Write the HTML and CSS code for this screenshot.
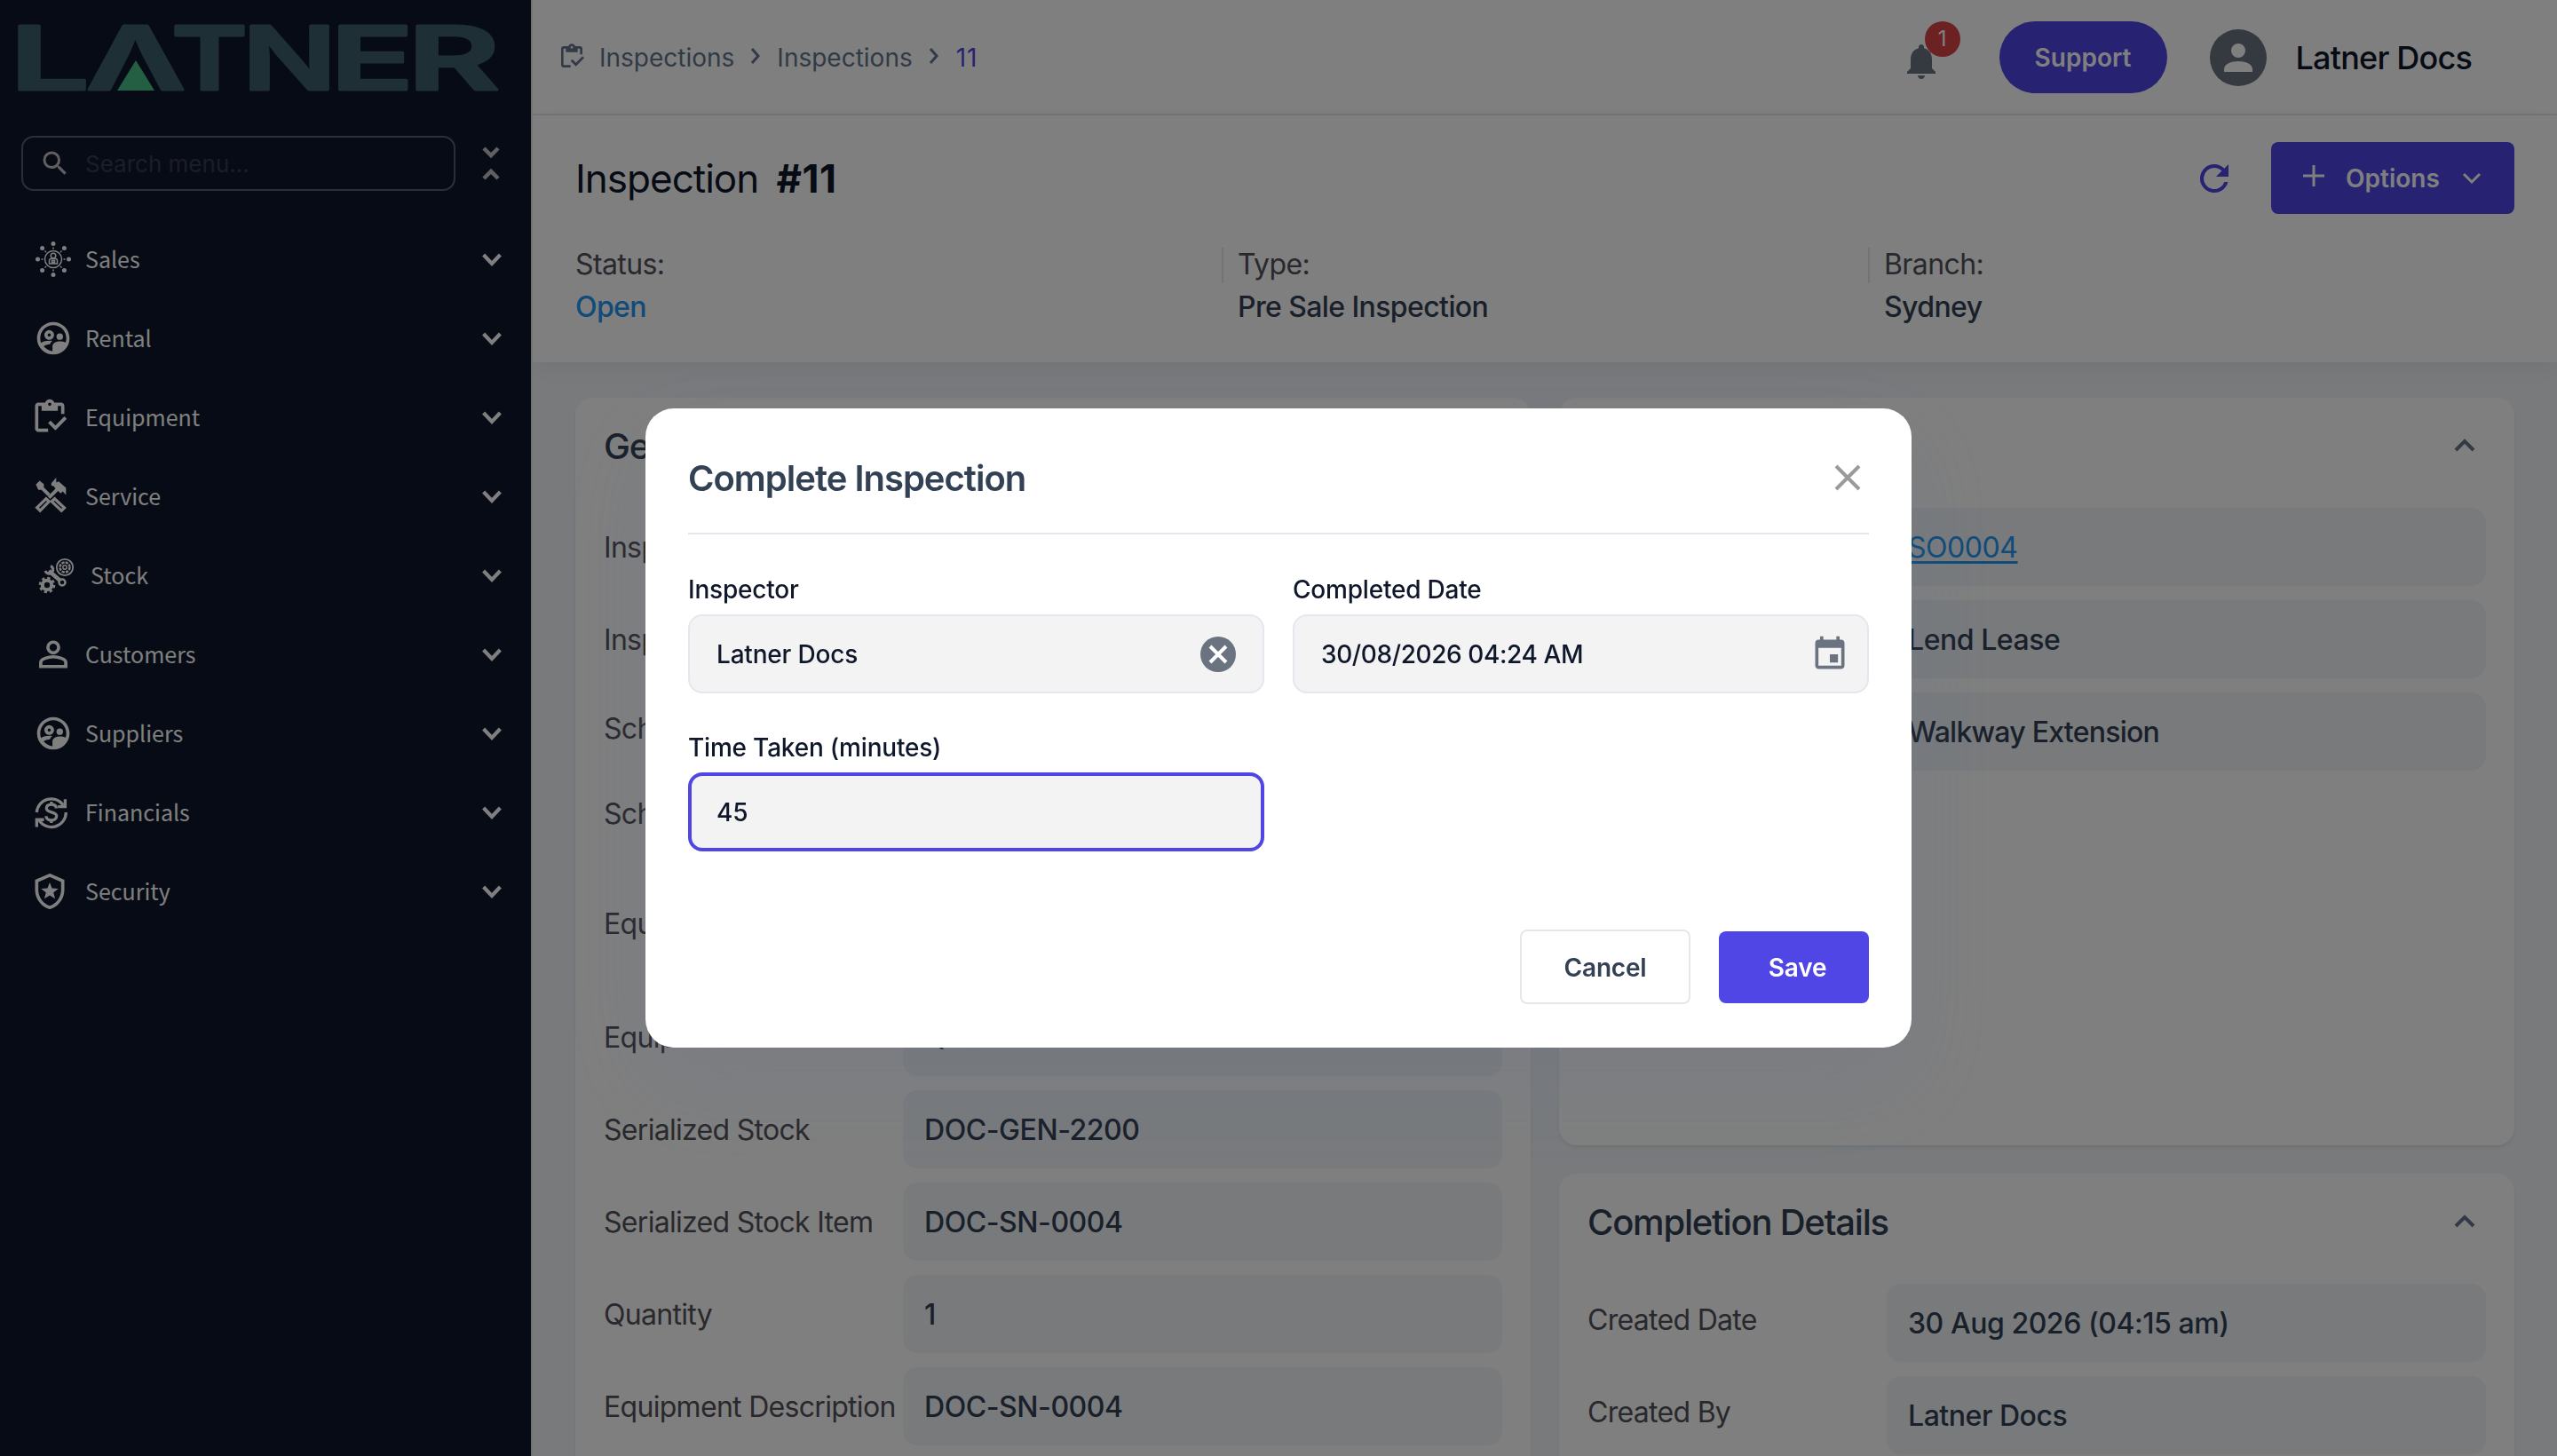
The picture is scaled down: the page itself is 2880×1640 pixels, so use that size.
FILE: index.html
```html
<!DOCTYPE html>
<html lang="en">
<head>
  <meta charset="UTF-8">
  <meta name="viewport" content="width=device-width, initial-scale=1.0">
  <title>Inspection #11</title>
  <link rel="stylesheet" href="styles.css">
</head>
<body>
  <!-- shared icons -->
  <svg width="0" height="0" class="defs">
    <symbol id="chevron" viewBox="0 0 24 24"><path d="M4.500 8l7.500 8 7.500-8" fill="none" stroke="currentColor"/></symbol>
    <symbol id="group" viewBox="0 0 24 24"><path fill="currentColor" fill-rule="evenodd" d="M12 2C6.480 2 2 6.480 2 12s4.480 10 10 10 10-4.480 10-10S17.520 2 12 2zM4 12c0-4.420 3.580-8 8-8s8 3.580 8 8c0 .9-.15 1.760-.42 2.570-.9-.4-2.280-.68-3.580-.68-2 0-4.500 1-4.500 3v3C10.400 19.900 7.600 18.800 6.100 16.900c1.200-.9 2.800-1.100 3.800-1.200.300-.7.800-1.400 1.500-2-.7-.2-1.400-.2-1.900-.2-1.500 0-3.700.4-5 1.300A8 8 0 0 1 4 12z"/><path fill="currentColor" fill-rule="evenodd" d="M9.500 7a3 3 0 1 0 0 6 3 3 0 0 0 0-6zm0 2a1 1 0 1 1 0 2 1 1 0 0 1 0-2z"/><circle cx="16" cy="11" r="2" fill="currentColor"/></symbol>
    <symbol id="clipboard" viewBox="0 0 24 24"><path fill="currentColor" fill-rule="evenodd" d="M5 5h2v3h10V5h2v5h2V5c0-1.100-.9-2-2-2h-4.180C14.400 1.840 13.300 1 12 1s-2.400.84-2.820 2H5c-1.100 0-2 .9-2 2v14c0 1.100.9 2 2 2h6v-2H5V5zm7-2c.55 0 1 .45 1 1s-.45 1-1 1-1-.45-1-1 .45-1 1-1z"/><path fill="currentColor" d="M21 11.500L15.510 17l-3.010-3-1.500 1.500L15.510 20l6.990-7z"/></symbol>
  </svg>

  <aside class="sidebar">
    <svg class="logo" width="550" height="86" viewBox="0 0 550 86">
      <g class="logo_text">
        <text x="-13" y="81" textLength="90" lengthAdjust="spacingAndGlyphs">L</text>
        <text x="73" y="81" textLength="112" lengthAdjust="spacingAndGlyphs">Λ</text>
        <text x="169" y="81" textLength="86" lengthAdjust="spacingAndGlyphs">T</text>
        <text x="249" y="81" textLength="106" lengthAdjust="spacingAndGlyphs">N</text>
        <text x="348" y="81" textLength="94" lengthAdjust="spacingAndGlyphs">E</text>
        <text x="435" y="81" textLength="104" lengthAdjust="spacingAndGlyphs">R</text>
      </g>
      <polygon points="129,48 150,82 108,82" class="logo_mark"/>
    </svg>
    <div class="search_row">
      <div class="search">
        <svg width="36" height="36" viewBox="0 0 24 24"><path fill="currentColor" d="M15.500 14h-.79l-.28-.27A6.470 6.470 0 0 0 16 9.500 6.500 6.500 0 1 0 9.500 16c1.610 0 3.090-.59 4.230-1.570l.27.28v.79l5 4.990L20.490 19l-4.990-5zm-6 0C7.010 14 5 11.990 5 9.500S7.010 5 9.500 5 14 7.010 14 9.500 11.990 14 9.500 14z"/></svg>
        <span>Search menu...</span>
      </div>
      <svg class="collapse" width="20" height="40" viewBox="0 0 20 40"><path d="M2 3l8 8 8-8M2 37l8-8 8 8"/></svg>
    </div>
    <nav class="menu">
      <a><svg class="ico" width="44" height="44" viewBox="0 0 44 44">
          <g fill="currentColor"><circle cx="22" cy="4.500" r="2.500"/><circle cx="22" cy="39.500" r="2.500"/><circle cx="4.500" cy="22" r="2.500"/><circle cx="39.500" cy="22" r="2.500"/><circle cx="9.600" cy="9.600" r="2.500"/><circle cx="34.400" cy="9.600" r="2.500"/><circle cx="9.600" cy="34.400" r="2.500"/><circle cx="34.400" cy="34.400" r="2.500"/></g>
          <g fill="none" stroke="currentColor" stroke-width="1.500"><circle cx="22" cy="22" r="9.500"/><circle cx="22" cy="18" r="2.800"/><path d="M17.500 27v-3.500c0-1.200 1-2 2-2h5c1 0 2 .8 2 2V27zM20.500 23.500h3v2h-3z"/><path d="M22 8.500v2M22 33.500v2M8.500 22h2M33.500 22h2M12.500 12.500l1.500 1.500M30 30l1.500 1.500M31.500 12.500L30 14M14 30l-1.500 1.500"/></g>
        </svg><span>Sales</span><svg class="chev"><use href="#chevron"/></svg></a>
      <a><svg class="ico"><use href="#group"/></svg><span>Rental</span><svg class="chev"><use href="#chevron"/></svg></a>
      <a><svg class="ico left"><use href="#clipboard"/></svg><span>Equipment</span><svg class="chev"><use href="#chevron"/></svg></a>
      <a><svg class="ico left" viewBox="0 0 24 24">
          <path fill="currentColor" d="M3.500 4.800L5.800 2.500l2.600 2v2l4 4-1.500 1.500-4-4h-1.900z"/>
          <path fill="currentColor" d="M13 4l3-3.500v3l1.500-.7 4.500 4v4.400L20 9l-1.300 1.200-1.600-1.500-4.800 5-1.500-1.500 4.700-4.800-.9-1.500-1.600-.5z"/>
          <path fill="none" stroke="currentColor" stroke-width="1.800" d="M9.800 13.500l-5.600 5.400 1.900 1.900 5.500-5.600zM15 13.500l6 5.600-1.800 1.800-6-5.700z"/>
        </svg><span>Service</span><svg class="chev"><use href="#chevron"/></svg></a>
      <a><svg class="ico stock" viewBox="0 0 44 44">
          <circle cx="31" cy="13" r="9.200" fill="none" stroke="currentColor" stroke-width="1.800"/>
          <circle cx="31" cy="13" r="5.500" fill="none" stroke="currentColor" stroke-width="2.500" stroke-dasharray="3.200 1.120"/>
          <circle cx="31" cy="13" r="2.200" fill="none" stroke="currentColor" stroke-width="1.500"/>
          <path d="M13 17l14 12" fill="none" stroke="currentColor" stroke-width="4.500"/>
          <path d="M15 11.500a4.500 4.500 0 1 1-6 5.500" fill="none" stroke="currentColor" stroke-width="3"/>
          <circle cx="28" cy="30" r="3.500" fill="#0f172a" stroke="currentColor" stroke-width="2.500"/>
          <circle cx="11" cy="33" r="5.200" fill="#0f172a" stroke="currentColor" stroke-width="4"/>
          <circle cx="11" cy="33" r="8" fill="none" stroke="currentColor" stroke-width="2.500" stroke-dasharray="3.300 2.983"/>
        </svg><span>Stock</span><svg class="chev"><use href="#chevron"/></svg></a>
      <a><svg class="ico" viewBox="0 0 24 24"><path fill="none" stroke="currentColor" stroke-width="2" d="M12 4.500a3.300 3.300 0 1 0 0 6.600 3.300 3.300 0 0 0 0-6.600zM4.300 19.500V17c0-2.300 5-3.500 7.700-3.500s7.700 1.200 7.700 3.500v2.500z"/></svg><span>Customers</span><svg class="chev"><use href="#chevron"/></svg></a>
      <a><svg class="ico"><use href="#group"/></svg><span>Suppliers</span><svg class="chev"><use href="#chevron"/></svg></a>
      <a><svg class="ico left" viewBox="0 0 24 24"><path fill="none" stroke="currentColor" stroke-width="1.800" d="M4 12a9 9 0 0 1 16.300-4.500M22 12A9 9 0 0 1 5.500 17M21.500 4v4.500H17M4 21v-4.500h4.500M16 9.500c0-1.500-1.300-2.300-3-2.300s-3 .8-3 2.400c0 3 6.200 1.600 6.200 4.700 0 1.600-1.400 2.500-3.200 2.500s-3.200-.9-3.200-2.500M13 5.500v1.700M13 16.800v1.700"/></svg><span>Financials</span><svg class="chev"><use href="#chevron"/></svg></a>
      <a><svg class="ico left" viewBox="0 0 24 24"><path fill="none" stroke="currentColor" stroke-width="2" d="M12 2.100L4 5.600v5.400c0 5 3.400 9.700 8 10.900 4.600-1.200 8-5.900 8-10.900V5.600z"/><path fill="currentColor" d="M12 6.500l1.400 3.600 3.900.2-3 2.400 1 3.800-3.300-2.100-3.300 2.100 1-3.800-3-2.400 3.900-.2z"/></svg><span>Security</span><svg class="chev"><use href="#chevron"/></svg></a>
    </nav>
  </aside>

  <main class="main">
    <header class="topbar">
      <div class="crumbs">
        <svg class="crumb_ico"><use href="#clipboard"/></svg>
        <span>Inspections</span>
        <svg class="sep" viewBox="0 0 10 18"><path d="M1 1l7 8-7 8"/></svg>
        <span>Inspections</span>
        <svg class="sep" viewBox="0 0 10 18"><path d="M1 1l7 8-7 8"/></svg>
        <span class="current">11</span>
      </div>
      <div class="bell">
        <svg width="48" height="48" viewBox="0 0 24 24"><path fill="currentColor" d="M12 22c1.100 0 2-.9 2-2h-4c0 1.100.9 2 2 2zm6-6v-5c0-3.070-1.640-5.640-4.500-6.320V4c0-.83-.67-1.500-1.500-1.500s-1.500.67-1.500 1.500v.68C7.630 5.360 6 7.920 6 11v5l-2 2v1h16v-1l-2-2z"/></svg>
        <span class="badge">1</span>
      </div>
      <button type="button" class="support">Support</button>
      <svg class="avatar" viewBox="0 0 64 64"><circle cx="32" cy="32" r="32" fill="#68747f"/><path fill="#fff" d="M32 16a8 8 0 1 0 0 16 8 8 0 0 0 0-16zM16 48v-3c0-6 8-9 16-9s16 3 16 9v3z"/></svg>
      <span class="user">Latner Docs</span>
    </header>

    <section class="page_head">
      <div class="title_row">
        <h1>Inspection <b>#11</b></h1>
        <svg class="refresh" viewBox="0 0 24 24"><path fill="currentColor" d="M17.650 6.350A7.960 7.960 0 0 0 12 4a8 8 0 1 0 7.730 10h-2.080A6 6 0 1 1 12 6c1.660 0 3.140.69 4.220 1.780L13 11h7V4z"/></svg>
        <button type="button" class="options">
          <svg width="26" height="26" viewBox="0 0 26 26"><path d="M13 1v24M1 13h24"/></svg>
          Options
          <svg class="opt_chev" width="22" height="14" viewBox="0 0 22 14"><path d="M2 2l9 9 9-9"/></svg>
        </button>
      </div>
      <div class="facts">
        <div><p>Status:</p><strong class="open">Open</strong></div>
        <div><p>Type:</p><strong>Pre Sale Inspection</strong></div>
        <div><p>Branch:</p><strong>Sydney</strong></div>
      </div>
    </section>

    <section class="cards">
      <div class="card tall">
        <h2>General</h2>
        <dl>
          <dt>Inspection</dt><dd></dd>
          <dt>Inspection</dt><dd></dd>
          <dt>Sched</dt><dd class="mid"></dd>
          <dt>Sched</dt><dd class="mid"></dd>
          <dt>Equipment</dt><dd class="big"></dd>
          <dt>Equipment Model</dt><dd>QAS 20</dd>
          <dt>Serialized Stock</dt><dd>DOC-GEN-2200</dd>
          <dt>Serialized Stock Item</dt><dd>DOC-SN-0004</dd>
          <dt>Quantity</dt><dd>1</dd>
          <dt>Equipment Description</dt><dd>DOC-SN-0004</dd>
        </dl>
      </div>
      <div class="col">
        <div class="card sale">
          <h2><span></span><svg class="up" viewBox="0 0 24 16"><path d="M2 13L12 3l10 10"/></svg></h2>
          <dl>
            <dt></dt><dd><a class="link">SO0004</a></dd>
            <dt></dt><dd>Lend Lease</dd>
            <dt></dt><dd class="tight">Walkway Extension</dd>
          </dl>
        </div>
        <div class="card completion">
          <h2>Completion Details <svg class="up" viewBox="0 0 24 16"><path d="M2 13L12 3l10 10"/></svg></h2>
          <dl>
            <dt>Created Date</dt><dd>30 Aug 2026 (04:15 am)</dd>
            <dt>Created By</dt><dd>Latner Docs</dd>
          </dl>
        </div>
      </div>
    </section>
  </main>

  <div class="overlay"></div>
  <div class="modal">
    <div class="modal_head">
      <h3>Complete Inspection</h3>
      <svg width="30" height="30" viewBox="0 0 30 30"><path d="M2 2l26 26M28 2L2 28"/></svg>
    </div>
    <div class="fields">
      <div class="field">
        <label>Inspector</label>
        <div class="input">Latner Docs
          <svg class="clear" width="40" height="40" viewBox="0 0 40 40"><circle cx="20" cy="20" r="20" fill="#6b7280"/><path d="M11 11l18 18M29 11L11 29" stroke="#fff" stroke-width="4"/></svg>
        </div>
      </div>
      <div class="field">
        <label>Completed Date</label>
        <div class="input date">30/08/2026 04:24 AM
          <svg class="cal" width="44" height="44" viewBox="0 0 24 24"><path fill="#6b7280" fill-rule="evenodd" d="M17 12h-5v5h5v-5zM16 1v2H8V1H6v2H5c-1.110 0-2 .9-2 2v14c0 1.100.89 2 2 2h14c1.100 0 2-.9 2-2V5c0-1.100-.9-2-2-2h-1V1h-2zm3 18H5V8h14v11z"/></svg>
        </div>
      </div>
      <div class="field">
        <label>Time Taken (minutes)</label>
        <div class="input focus">45</div>
      </div>
    </div>
    <div class="actions">
      <button type="button" class="cancel">Cancel</button>
      <button type="button" class="save">Save</button>
    </div>
  </div>
</body>
</html>
```
FILE: styles.css
```css
:root {
  /* color */
  --primary: #4f46e5;
  --navy: #0f172a;
  --slate: #334155;
  --muted: #52525b;
  --bg: #f1f5f9;
  --line: #e5e7ef;
}

* {
  box-sizing: border-box;
  margin: 0;
  padding: 0;
}

body {
  display: flex;
  width: 2880px;
  height: 1640px;
  overflow: hidden;
  background: var(--bg);
  color: var(--navy);
  font-family: Inter, "Liberation Sans", sans-serif;
  font-size: 32px;
}

button {
  border: 0;
  font-family: inherit;
}

.defs {
  position: absolute;
}

/* sidebar */
.sidebar {
  flex: none;
  width: 600px;
  height: 1640px;
  padding: 20px 24px 0;
  border-right: 2px solid #e5e7eb;
  background: var(--navy);
}

.logo {
  display: block;
  overflow: visible;
}

.logo_text {
  fill: #3c5e6c;
  stroke: #3c5e6c;
  stroke-width: 3;
  stroke-linejoin: round;
  font-size: 99px;
  font-weight: 600;
}

.logo_mark {
  fill: #4abe86;
}

.search_row {
  display: flex;
  align-items: center;
  margin-top: 47px;
}

.search {
  display: flex;
  align-items: center;
  width: 489px;
  height: 62px;
  padding-left: 18px;
  border: 2px solid #585e6a;
  border-radius: 14px;
  color: #363d4f;
  font-size: 26px;
}

.search svg {
  margin-right: 16px;
  color: #c0c0c0;
}

.collapse {
  margin-left: 30px;
  fill: none;
  stroke: #c0c0c0;
  stroke-width: 4.5;
}

.menu {
  display: flex;
  flex-direction: column;
  margin-top: 32px;
  font-family: "Noto Sans CJK SC", sans-serif;
  font-size: 25px;
  line-height: 89px;
}

.menu a {
  display: flex;
  align-items: center;
  height: 89px;
  padding: 0 5px 0 14px;
  color: #fff;
}

.menu span {
  flex: 1;
}

.ico {
  width: 44px;
  height: 44px;
  margin-right: 14px;
}

.ico.left {
  margin-left: -4px;
  margin-right: 18px;
}

.ico.stock {
  margin-left: 4px;
  margin-right: 16px;
}

.chev {
  width: 30px;
  height: 30px;
  stroke-width: 3.4;
}

/* top bar */
.main {
  flex: none;
  width: 2280px;
  height: 1640px;
  overflow: hidden;
}

.topbar {
  display: flex;
  align-items: center;
  height: 130px;
  padding: 1px 96px 0 28px;
  border-bottom: 2px solid var(--line);
  background: #fff;
}

.crumbs {
  display: flex;
  align-items: center;
  flex: 1;
  color: #64748b;
  font-size: 28px;
}

.crumb_ico {
  width: 32px;
  height: 32px;
  margin: 0 15px 2px 0;
}

.sep {
  width: 10px;
  height: 18px;
  margin: 0 19px 4px;
  overflow: visible;
  fill: none;
  stroke: currentColor;
  stroke-width: 3;
}

.crumbs .current {
  margin-left: 1px;
  color: var(--primary);
  letter-spacing: 1px;
}

.bell {
  position: relative;
  height: 48px;
  margin: 8px 64px 0 0;
  color: #68747f;
}

.badge {
  position: absolute;
  left: 28px;
  top: -21px;
  width: 40px;
  height: 40px;
  border-radius: 50%;
  background: #d84444;
  color: #fff;
  font-size: 24px;
  line-height: 40px;
  text-align: center;
}

.support {
  width: 189px;
  height: 81px;
  border-radius: 41px;
  background: var(--primary);
  color: #fff;
  font-size: 28px;
  font-weight: 600;
}

.avatar {
  width: 64px;
  height: 64px;
  margin: 0 33px 0 48px;
}

.user {
  font-size: 36px;
  font-weight: 500;
  letter-spacing: -.8px;
}

/* page head */
.page_head {
  position: relative;
  height: 278px;
  padding: 30px 48px 0 48px;
  background: #fff;
  box-shadow: 0 8px 24px rgba(0, 0, 0, .06);
}

.title_row {
  display: flex;
  align-items: center;
  height: 81px;
}

.title_row h1 {
  flex: 1;
  font-size: 44px;
  font-weight: 400;
  letter-spacing: -1px;
}

.title_row b {
  margin-left: 9px;
  font-weight: 700;
  letter-spacing: .4px;
}

.refresh {
  width: 48px;
  height: 48px;
  margin-right: 40px;
  color: var(--primary);
}

.options {
  display: flex;
  align-items: center;
  width: 274px;
  height: 81px;
  padding-left: 35px;
  border-radius: 8px;
  background: var(--primary);
  color: #fff;
  font-size: 28px;
  font-weight: 600;
}

.options svg {
  margin: 0 23px 6px 0;
  fill: none;
  stroke: #fff;
  stroke-width: 3;
}

.options .opt_chev {
  margin: 0 0 0 25px;
}

.facts {
  display: grid;
  grid-template-columns: repeat(3, 728px);
  margin-top: 38px;
  letter-spacing: -.6px;
}

.facts p {
  height: 40px;
  color: var(--muted);
  line-height: 38px;
}

.facts strong {
  display: block;
  margin-top: 6px;
  color: var(--slate);
  font-weight: 500;
  line-height: 42px;
}

.facts .open {
  color: #2196f3;
}

.facts div + div p {
  padding-left: 16px;
  border-left: 2px solid var(--line);
}

.facts div + div strong {
  padding-left: 18px;
}

/* cards */
.cards {
  display: flex;
  gap: 32px;
  padding: 40px 48px 0 48px;
}

.col {
  display: flex;
  flex-direction: column;
  gap: 32px;
}

.card {
  width: 1076px;
  padding: 0 32px;
  border-radius: 20px;
  background: #fff;
  box-shadow: 0 3px 4px rgba(0, 0, 0, .07);
}

.card.tall {
  height: 1192px;
  border-radius: 20px 20px 0 0;
}

.card.sale {
  height: 842px;
}

.card.completion {
  height: 318px;
  border-radius: 20px 20px 0 0;
}

.card h2 {
  display: flex;
  align-items: center;
  justify-content: space-between;
  height: 124px;
  padding-bottom: 16px;
  color: var(--slate);
  font-size: 40px;
  font-weight: 500;
  letter-spacing: -1.2px;
}

.up {
  width: 24px;
  height: 16px;
  margin-right: 12px;
  fill: none;
  stroke: #64748b;
  stroke-width: 4;
}

.card dl {
  display: grid;
  grid-template-columns: 337px 675px;
  row-gap: 16px;
  align-items: center;
}

.card dt {
  color: var(--muted);
  letter-spacing: -.7px;
  white-space: nowrap;
}

.completion dt {
  padding-bottom: 8px;
}

.card dd {
  display: flex;
  align-items: center;
  height: 88px;
  padding: 1px 0 0 24px;
  border-radius: 16px;
  background: var(--bg);
  color: var(--slate);
  font-weight: 500;
  letter-spacing: -.45px;
}

.card dd.tight {
  letter-spacing: -.75px;
}

.card dd.mid {
  height: 80px;
}

.card dd.big {
  height: 136px;
}

.link {
  color: #2196f3;
  font-weight: 400;
  text-decoration: underline;
  text-decoration-thickness: 3px;
  text-underline-offset: 4px;
}

/* modal */
.overlay {
  position: fixed;
  inset: 0;
  background: rgba(0, 0, 0, .5);
}

.modal {
  position: fixed;
  left: 727px;
  top: 460px;
  width: 1426px;
  height: 720px;
  padding: 0 48px;
  border-radius: 32px;
  background: #fff;
  box-shadow: 0 40px 100px rgba(95, 112, 150, .17);
}

.modal_head {
  display: flex;
  align-items: center;
  justify-content: space-between;
  height: 142px;
  padding: 16px 9px 0 0;
  border-bottom: 2px solid var(--line);
}

.modal_head h3 {
  color: var(--slate);
  font-size: 40px;
  font-weight: 600;
  letter-spacing: -1px;
}

.modal_head svg {
  stroke: #9a9a9a;
  stroke-width: 4;
}

.fields {
  display: grid;
  grid-template-columns: 1fr 1fr;
  gap: 41px 32px;
  margin-top: 42px;
}

.field label {
  display: block;
  height: 48px;
  font-size: 28px;
  font-weight: 500;
  letter-spacing: -.2px;
  line-height: 40px;
}

.input {
  display: flex;
  align-items: center;
  justify-content: space-between;
  height: 89px;
  padding: 0 30px;
  border: 2px solid var(--line);
  border-radius: 16px;
  background: #f3f3f3;
  font-size: 28px;
  font-weight: 500;
  letter-spacing: -.2px;
}

.input.date {
  letter-spacing: -.4px;
}

.input .cal {
  margin-right: -10px;
}

.input.focus {
  padding: 0 28px;
  border: 4px solid var(--primary);
}

.actions {
  display: flex;
  align-items: center;
  justify-content: flex-end;
  gap: 32px;
  margin-top: 88px;
}

.actions button {
  padding-top: 2px;
  border-radius: 8px;
  font-size: 28px;
  font-weight: 600;
  letter-spacing: -.2px;
}

.cancel {
  width: 192px;
  height: 84px;
  border: 2px solid #e5e7eb;
  background: #fff;
  color: var(--slate);
}

.actions .save {
  width: 169px;
  height: 81px;
  padding-left: 8px;
  background: var(--primary);
  color: #fff;
}
```
